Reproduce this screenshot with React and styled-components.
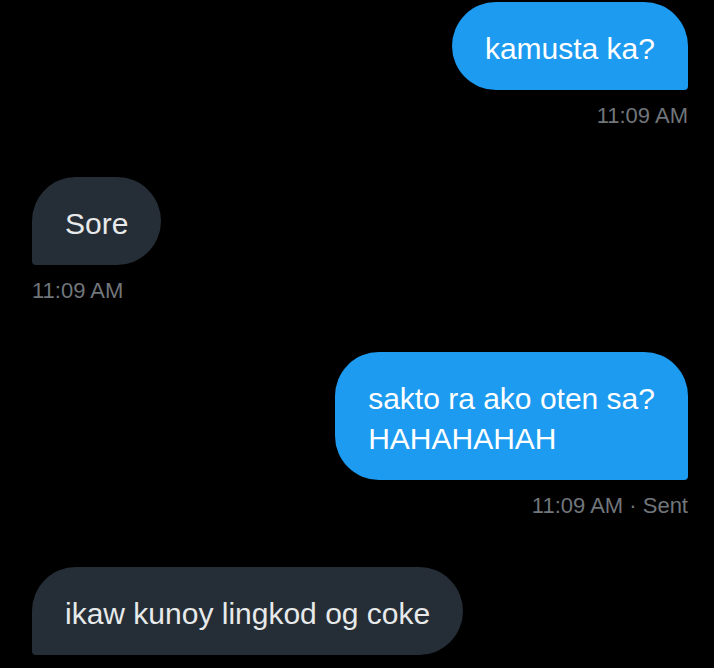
import React from 'react'
import styled, { createGlobalStyle } from 'styled-components'

const GlobalStyle = createGlobalStyle`
  html, body {
    margin: 0;
    padding: 0;
    background: #000;
  }
  body {
    font-family: "Liberation Sans", Roboto, "Noto Sans", sans-serif;
  }
`

const Thread = styled.div`
  display: flex;
  flex-direction: column;
  gap: 49px;
  padding: 2px 26px 0 32px;
  height: 668px;
  overflow: hidden;
  box-sizing: border-box;
`

const Group = styled.div`
  display: flex;
  flex-direction: column;
  align-items: ${props => (props.mine ? 'flex-end' : 'flex-start')};
`

const Bubble = styled.div`
  background-color: ${props => (props.mine ? '#1D9BF0' : '#252E36')};
  color: ${props => (props.mine ? '#FFFFFF' : '#E7E9EA')};
  font-size: 30px;
  line-height: 40px;
  padding: 27px 33px 21px;
  border-radius: ${props => (props.mine ? '44px 44px 4px 44px' : '44px 44px 44px 4px')};
  max-width: 520px;
  white-space: pre-line;
`

const Meta = styled.div`
  margin-top: 14px;
  font-size: 22px;
  line-height: 24px;
  color: #71767B;
`

const messages = [
  { mine: true, text: 'kamusta ka?', meta: '11:09 AM' },
  { mine: false, text: 'Sore', meta: '11:09 AM' },
  { mine: true, text: 'sakto ra ako oten sa?\nHAHAHAHAH', meta: '11:09 AM · Sent' },
  { mine: false, text: 'ikaw kunoy lingkod og coke', meta: '' },
]

const App = () => {
  return (
    <>
      <GlobalStyle />
      <Thread>
        {messages.map((m, i) => (
          <Group key={i} mine={m.mine}>
            <Bubble mine={m.mine}>{m.text}</Bubble>
            {m.meta && <Meta>{m.meta}</Meta>}
          </Group>
        ))}
      </Thread>
    </>
  )
}

export default App
